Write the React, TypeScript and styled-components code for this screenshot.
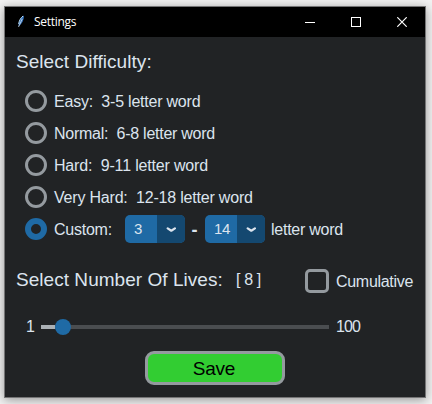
import React from "react";
import styled, { createGlobalStyle } from "styled-components";

const GlobalStyle = createGlobalStyle`
  *, *::before, *::after { box-sizing: border-box; }
  body { margin: 0; background: #f0f0f0; overflow: hidden; }
`;

const Desktop = styled.div`
  height: 404px;
  padding: 6px 6px 6px 4px;
  background: #f2f2f2;
`;

const Window = styled.main`
  width: 422px;
  height: 392px;
  border: 1px solid #757576;
  background: #212325;
  box-shadow: 0 2px 10px rgba(0, 0, 0, 0.38);
  color: #dce4ee;
  font-family: "Liberation Sans", Arial, sans-serif;
  font-size: 16px;
`;

const TitleBar = styled.header`
  display: flex;
  align-items: center;
  height: 30px;
  padding-left: 11px;
  background: #000;
  color: #fff;
`;

const Title = styled.h1`
  flex: 1;
  margin: 0 0 0 8px;
  font: 400 12px/16px "Open Sans", sans-serif;
  letter-spacing: -0.28px;
`;

const WindowButton = styled.button`
  display: flex;
  align-items: center;
  justify-content: center;
  width: 46px;
  height: 30px;
  padding: 0;
  border: 0;
  background: none;
  color: #fff;
`;

const Content = styled.div`
  display: flex;
  flex-direction: column;
  padding: 11px 11px 0;
`;

const Text = styled.span<{ $track?: number }>`
  padding-top: 1px;
  white-space: pre;
  line-height: 20px;
  letter-spacing: ${({ $track = -0.25 }) => $track}px;
`;

const Heading = styled.h2<{ $track?: number }>`
  margin: 0;
  font-size: 19px;
  font-weight: 400;
  line-height: 28px;
  white-space: pre;
  letter-spacing: ${({ $track = 0 }) => $track}px;
`;

const Options = styled.div`
  padding: 9px 0 0 9px;
`;

const OptionRow = styled.div`
  display: flex;
  align-items: center;
  height: 32px;
`;

const Radio = styled.span<{ $selected?: boolean }>`
  flex: none;
  width: 22px;
  height: 22px;
  margin-right: 7px;
  border: ${({ $selected }) => ($selected ? "6px solid #1f6aa5" : "3px solid #949a9f")};
  border-radius: 50%;
`;

const Select = styled.div`
  display: flex;
  width: 60px;
  height: 28px;
  border-radius: 5px;
  overflow: hidden;
  background: #1f6aa5;
`;

const SelectValue = styled.span`
  width: 32px;
  padding-left: 9px;
  font-size: 15px;
  letter-spacing: -0.4px;
  line-height: 28px;
`;

const SelectArrow = styled.span`
  display: flex;
  align-items: center;
  justify-content: center;
  width: 28px;
  background: #144870;
`;

const CustomControls = styled.div`
  display: flex;
  align-items: center;
  margin-left: auto;
  width: 289px;
`;

const Dash = styled.span`
  width: 20px;
  padding: 2px 1px 0 0;
  text-align: center;
  font-size: 18px;
  font-weight: 700;
`;

const UnitLabel = styled(Text)`
  padding-left: 6px;
`;

const LivesRow = styled.div`
  display: flex;
  align-items: center;
  height: 32px;
  margin-top: 20px;
`;

const LivesHeading = styled(Heading)`
  padding-bottom: 2px;
`;

const LivesCount = styled.div`
  width: 69px;
  margin-left: auto;
  padding-bottom: 2px;
`;

const CheckOption = styled.div`
  display: flex;
  align-items: center;
  gap: 7px;
  width: 109px;
`;

const Checkbox = styled.span`
  flex: none;
  width: 24px;
  height: 24px;
  border: 3px solid #949a9f;
  border-radius: 5px;
`;

const SliderRow = styled.div`
  display: grid;
  grid-template-columns: 15px 288px auto;
  grid-template-rows: 20px;
  align-items: center;
  height: 20px;
  margin-top: 20px;
  padding-left: 10px;
`;

const SliderTrack = styled.div`
  display: flex;
  align-items: center;
  height: 16px;
  background: linear-gradient(#4a4d50, #4a4d50) center / 100% 4px no-repeat;
`;

const SliderFill = styled.div`
  width: 14px;
  height: 4px;
  background: #aab0b5;
`;

const SliderThumb = styled.div`
  width: 16px;
  height: 16px;
  border-radius: 50%;
  background: #1f6aa5;
`;

const RangeLabel = styled(Text)`
  padding-top: 0;
`;

const MaxLabel = styled(RangeLabel)`
  padding-left: 7px;
`;

const SaveButton = styled.button`
  align-self: center;
  width: 140px;
  height: 34px;
  margin: 14px 0 0;
  padding: 1px 2px 0 0;
  border: 3px solid #949a9f;
  border-radius: 9px;
  background: #32cd32;
  color: #000;
  font: 400 19px/28px "Liberation Sans", Arial, sans-serif;
  letter-spacing: -0.2px;
`;

const levels = [
  { label: "Easy:  3-5 letter word", track: -0.22 },
  { label: "Normal:  6-8 letter word", track: -0.26 },
  { label: "Hard:  9-11 letter word", track: -0.18 },
  { label: "Very Hard:  12-18 letter word", track: -0.2 },
];

const Feather = () => (
  <svg width="10" height="14" viewBox="0 0 10 14">
    <path d="M8 .5C5 2 2.5 6 2.5 11.5C6 9 8 5 8 .5Z" fill="#3975bd" />
    <path d="M7 1C4.5 3 3 6 2.7 9" fill="none" stroke="#b9dcf5" />
    <path d="M6.2 4L2.5 12" fill="none" stroke="#e1edf5" strokeWidth=".7" />
  </svg>
);

const Dropdown = ({ value }: { value: string }) => (
  <Select role="combobox" aria-label="Word length">
    <SelectValue>{value}</SelectValue>
    <SelectArrow>
      <svg width="12" height="8" viewBox="0 0 12 8">
        <path d="M2.7 3.4L6.3 5.7L9.9 3.4" fill="none" stroke="#dce4ee" strokeWidth="2.3" strokeLinecap="round" strokeLinejoin="round" />
      </svg>
    </SelectArrow>
  </Select>
);

export default function App() {
  return (
    <>
      <GlobalStyle />
      <Desktop>
        <Window>
          <TitleBar>
            <Feather />
            <Title>Settings</Title>
            <WindowButton aria-label="Minimize">
              <svg width="10" height="10"><path d="M0 5.5H10" stroke="currentColor" /></svg>
            </WindowButton>
            <WindowButton aria-label="Maximize">
              <svg width="10" height="10"><rect x=".5" y=".5" width="9" height="9" fill="none" stroke="currentColor" /></svg>
            </WindowButton>
            <WindowButton aria-label="Close">
              <svg width="10" height="10"><path d="M.3 .3L9.7 9.7M9.7 .3L.3 9.7" stroke="currentColor" strokeWidth="1.2" /></svg>
            </WindowButton>
          </TitleBar>
          <Content>
            <Heading $track={0.05}>Select Difficulty:</Heading>
            <Options>
              {levels.map(({ label, track }) => (
                <OptionRow key={label}>
                  <Radio />
                  <Text $track={track}>{label}</Text>
                </OptionRow>
              ))}
              <OptionRow>
                <Radio $selected />
                <Text>Custom:</Text>
                <CustomControls>
                  <Dropdown value="3" />
                  <Dash>-</Dash>
                  <Dropdown value="14" />
                  <UnitLabel>letter word</UnitLabel>
                </CustomControls>
              </OptionRow>
            </Options>
            <LivesRow>
              <LivesHeading $track={0.04}>Select Number Of Lives:</LivesHeading>
              <LivesCount><Text $track={-0.35}>[ 8 ]</Text></LivesCount>
              <CheckOption>
                <Checkbox />
                <Text $track={-0.3}>Cumulative</Text>
              </CheckOption>
            </LivesRow>
            <SliderRow>
              <RangeLabel>1</RangeLabel>
              <SliderTrack>
                <SliderFill />
                <SliderThumb />
              </SliderTrack>
              <MaxLabel $track={-0.9}>100</MaxLabel>
            </SliderRow>
            <SaveButton>Save</SaveButton>
          </Content>
        </Window>
      </Desktop>
    </>
  );
}
